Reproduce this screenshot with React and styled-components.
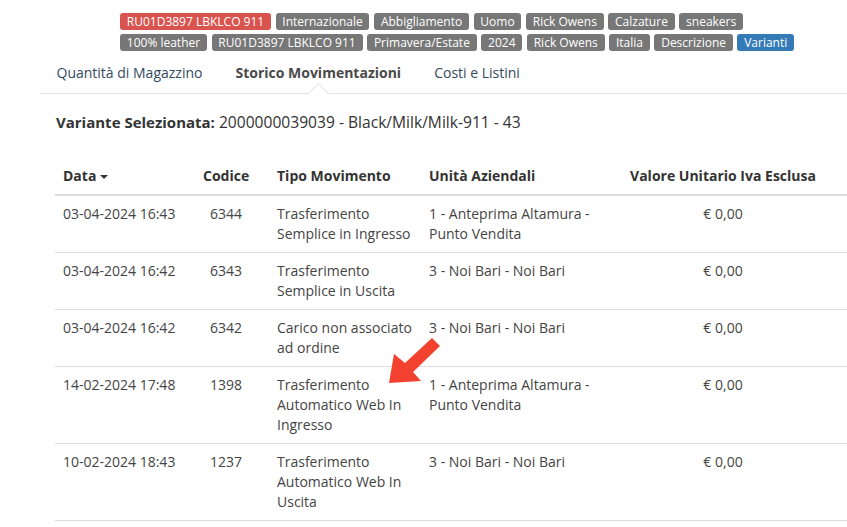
import React from "react";
import styled, { createGlobalStyle } from "styled-components";

const GlobalStyle = createGlobalStyle`
  html, body {
    margin: 0;
    padding: 0;
    background: #fff;
    overflow: hidden;
  }
  body {
    font-family: "Open Sans", "Noto Sans", sans-serif;
    color: #333;
  }
`;

const Page = styled.div`
  position: relative;
  padding: 13px 0 0 40px;
  width: 900px;
`;

const LabelBox = styled.div`
  display: flex;
  flex-wrap: wrap;
  gap: 4px 4.6px;
  width: 690px;
  margin-left: 80px;
`;

const colors = { red: "#d9534f", gray: "#777", blue: "#337ab7" };

const Label = styled.span`
  display: inline-block;
  height: 17px;
  line-height: 17px;
  padding: 0 6.8px;
  border-radius: 3px;
  font-size: 12px;
  color: #fff;
  background: ${(p) => colors[p.$kind || "gray"]};
  white-space: nowrap;
`;

const Tabs = styled.ul`
  display: flex;
  list-style: none;
  margin: 2px 0 0;
  padding: 0;
  border-bottom: 1px solid #e3e3e3;
`;

const Tab = styled.li`
  position: relative;
  padding: 10px 16.5px;
  line-height: 20px;
  font-size: 14px;
  color: ${(p) => (p.$active ? "#4a4a4a" : "#34495e")};
  font-weight: ${(p) => (p.$active ? 700 : 400)};

  ${(p) =>
    p.$active &&
    `
    &::after {
      content: "";
      position: absolute;
      left: 50%;
      bottom: -8px;
      width: 14px;
      height: 14px;
      margin-left: -7px;
      background: #fff;
      border-left: 1px solid #e3e3e3;
      border-top: 1px solid #e3e3e3;
      transform: rotate(45deg);
    }
  `}
`;

const Variant = styled.p`
  margin: 17px 0 25px 16px;
  font-size: 15.6px;
  line-height: 22px;
  color: #333;

  b {
    font-size: 15px;
    font-weight: 700;
  }
`;

const Table = styled.table`
  margin-left: 15px;
  width: 820px;
  border-collapse: collapse;
  table-layout: fixed;
  font-size: 14px;
  line-height: 20px;
  color: #444;
`;

const Th = styled.th`
  padding: 8px;
  text-align: ${(p) => p.$align || "left"};
  font-weight: 700;
  color: #333;
  border-bottom: 2px solid #ddd;
  ${(p) => p.$tight && "padding-right: 20px;"}
`;

const Td = styled.td`
  padding: 8px;
  vertical-align: top;
  text-align: ${(p) => p.$align || "left"};
  border-top: 1px solid #ddd;
  border-bottom: 1px solid #ddd;
  ${(p) => p.$tight && "padding-right: 20px;"}
`;

const Caret = styled.span`
  display: inline-block;
  width: 0;
  height: 0;
  margin-left: 4px;
  vertical-align: middle;
  border-top: 4px solid #333;
  border-left: 4px solid transparent;
  border-right: 4px solid transparent;
`;

const Arrow = styled.svg`
  position: absolute;
  left: 385px;
  top: 333px;
  width: 60px;
  height: 55px;
`;

const labelRows = [
  ["RU01D3897 LBKLCO 911", "red"],
  ["Internazionale"],
  ["Abbigliamento"],
  ["Uomo"],
  ["Rick Owens"],
  ["Calzature"],
  ["sneakers"],
  ["100% leather"],
  ["RU01D3897 LBKLCO 911"],
  ["Primavera/Estate"],
  ["2024"],
  ["Rick Owens"],
  ["Italia"],
  ["Descrizione"],
  ["Varianti", "blue"],
];

const rows = [
  ["03-04-2024 16:43", "6344", "Trasferimento Semplice in Ingresso", "1 - Anteprima Altamura - Punto Vendita"],
  ["03-04-2024 16:42", "6343", "Trasferimento Semplice in Uscita", "3 - Noi Bari - Noi Bari"],
  ["03-04-2024 16:42", "6342", "Carico non associato ad ordine", "3 - Noi Bari - Noi Bari"],
  ["14-02-2024 17:48", "1398", "Trasferimento Automatico Web In Ingresso", "1 - Anteprima Altamura - Punto Vendita"],
  ["10-02-2024 18:43", "1237", "Trasferimento Automatico Web In Uscita", "3 - Noi Bari - Noi Bari"],
];

export default function App() {
  return (
    <Page>
      <GlobalStyle />
      <LabelBox>
        {labelRows.map(([text, kind], i) => (
          <Label key={i} $kind={kind}>
            {text}
          </Label>
        ))}
      </LabelBox>

      <Tabs>
        <Tab>Quantità di Magazzino</Tab>
        <Tab $active>Storico Movimentazioni</Tab>
        <Tab>Costi e Listini</Tab>
      </Tabs>

      <Variant>
        <b>Variante Selezionata:</b> 2000000039039 - Black/Milk/Milk-911 - 43
      </Variant>

      <Table>
        <colgroup>
          <col style={{ width: 140 }} />
          <col style={{ width: 74 }} />
          <col style={{ width: 152 }} />
          <col style={{ width: 194 }} />
          <col style={{ width: 216 }} />
          <col />
        </colgroup>
        <thead>
          <tr>
            <Th>
              Data
              <Caret />
            </Th>
            <Th $align="center" $tight>
              Codice
            </Th>
            <Th>Tipo Movimento</Th>
            <Th>Unità Aziendali</Th>
            <Th $align="center">Valore Unitario Iva Esclusa</Th>
            <Th />
          </tr>
        </thead>
        <tbody>
          {rows.map((r) => (
            <tr key={r[1]}>
              <Td>{r[0]}</Td>
              <Td $align="center" $tight>
                {r[1]}
              </Td>
              <Td>{r[2]}</Td>
              <Td>{r[3]}</Td>
              <Td $align="center">€ 0,00</Td>
              <Td />
            </tr>
          ))}
        </tbody>
      </Table>

      <Arrow viewBox="0 0 60 55">
        <polygon
          points="4,50 9,21 20,30 47,5 55,13 28,39 36,48"
          fill="#f2412f"
        />
      </Arrow>
    </Page>
  );
}
